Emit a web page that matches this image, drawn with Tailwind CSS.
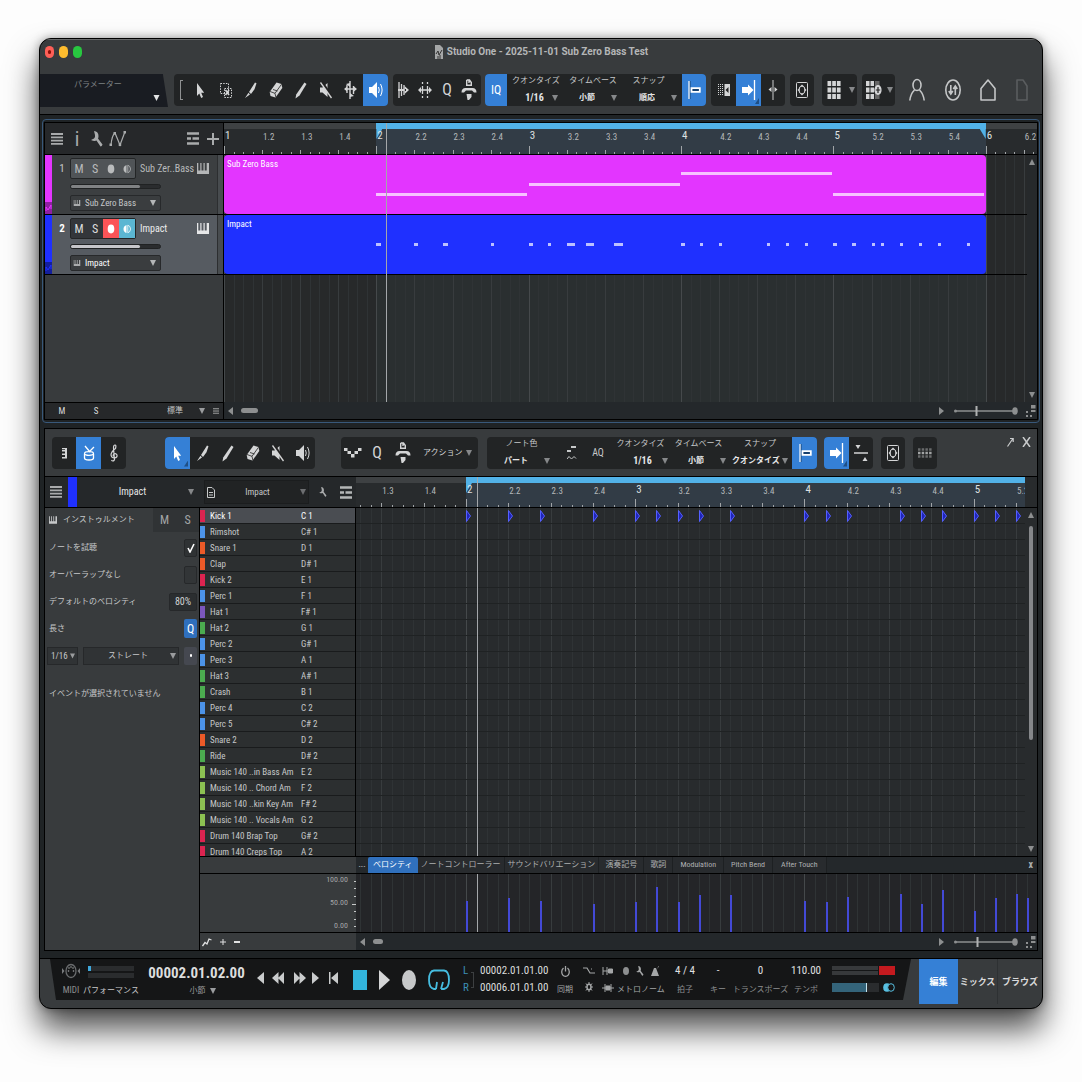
<!DOCTYPE html>
<html lang="ja">
<head>
  <meta charset="UTF-8" />
  <meta name="viewport" content="width=device-width, initial-scale=1" />
  <title>Studio One - 2025-11-01 Sub Zero Bass Test</title>
  <script src="https://cdn.jsdelivr.net/npm/@tailwindcss/browser@4"></script>
</head>
<body class="min-h-screen bg-[#fdfdfd] px-[39px] pt-[38px] pb-[74px] font-['Roboto_Condensed','Roboto','Noto_Sans_CJK_JP',sans-serif] text-[9px] leading-3 text-[#c6c8c9]">

  <!-- Icon sprite -->
  <svg class="hidden" aria-hidden="true">
    <symbol id="i-down" viewBox="0 0 6 6"><path fill="currentColor" d="M0 0h6L3 6z"/></symbol>
    <symbol id="i-up" viewBox="0 0 6 6"><path fill="currentColor" d="M0 6h6L3 0z"/></symbol>
    <symbol id="i-left" viewBox="0 0 5 8"><path fill="currentColor" d="M5 0v8L0 4z"/></symbol>
    <symbol id="i-right" viewBox="0 0 5 8"><path fill="currentColor" d="M0 0v8l5-4z"/></symbol>
    <symbol id="i-cursor" viewBox="0 0 14 20"><path fill="currentColor" d="M3 3v13l2.300-2.400L7.200 18l1.800-1-1.800-4.300h3z"/></symbol>
    <symbol id="i-range" viewBox="0 0 14 20"><path fill="none" stroke="currentColor" stroke-dasharray="1.500 1.200" d="M1.500 3.500h8v10h-8z"/><path fill="none" stroke="currentColor" stroke-dasharray="1.500 1.200" d="M5.500 8.500h7v9h-7z"/><path stroke="currentColor" stroke-width="1.600" d="M6.500 10l3.500 5M10 10l-3.500 5"/></symbol>
    <symbol id="i-knife" viewBox="0 0 14 20"><path fill="currentColor" d="M11 2.500l1.500.8-2 6L7 14 5 12zM4.500 12.800L6 14.400 1 18z"/></symbol>
    <symbol id="i-eraser" viewBox="0 0 14 20"><path fill="currentColor" d="M7.500 2.500l5 1.500.8 4-6.800 9.500-5-1.500L.700 12z"/><path fill="none" stroke="#222" stroke-width=".8" d="M1 11.500l5 1.800.800 3.700M6 13.300l6.500-9M4 9.500l4.500 1.500"/></symbol>
    <symbol id="i-paint" viewBox="0 0 14 20"><path fill="currentColor" d="M10.500 2.500l2 1.500-7 11.500-4 3 .7-4z"/></symbol>
    <symbol id="i-mute" viewBox="0 0 14 20"><path fill="currentColor" d="M1 7.500h2.500L8.500 3v14l-5-4.500H1z"/><path stroke="#222" stroke-width="2.500" d="M3 2l10 15"/><path stroke="currentColor" stroke-width="1.300" d="M1.500 2.500l11 15.500"/></symbol>
    <symbol id="i-listen" viewBox="0 0 14 20"><path fill="currentColor" d="M0 7h3l5-5v16l-5-5H0z"/><path fill="none" stroke="currentColor" d="M9.500 7q1.500 3 0 6M11.500 4q3.200 6 0 12"/></symbol>
    <symbol id="i-bend" viewBox="0 0 14 20"><path fill="none" stroke="currentColor" stroke-width="1.400" d="M6 1v18M1 9h10M3 5v8M9.500 6v8"/><path fill="currentColor" d="M2 4l4 3V3zM10 16l-4-3v4zM13 9l-3-2.500v5zM0 9l3-2.500v5z"/></symbol>
    <symbol id="i-snapin" viewBox="0 0 12 20"><path fill="none" stroke="currentColor" stroke-width="1.300" d="M2 2v16M4.500 4v12M7 5v10"/><path fill="currentColor" d="M12 10L7.500 6v8zM1 9h8v2H1z"/></symbol>
    <symbol id="i-stretch" viewBox="0 0 14 20"><path stroke="currentColor" stroke-width="1.300" d="M2 10h10M4.500 6v8M9.500 6v8M4.500 2v2M9.500 2v2M4.500 16v2M9.500 16v2"/><path fill="currentColor" d="M0 10l3-3v6zM14 10l-3-3v6z"/></symbol>
    <symbol id="i-macro" viewBox="0 0 16 22"><path fill="none" stroke="currentColor" stroke-width="1.400" d="M5.700 1v5.300h4.600V3.500L8.500 1H5.700M8 1v3"/><path fill="currentColor" d="M.500 13.500q0-4.500 4-4.500h7q4 0 4 4.500H13l-2-2H5l-2 2zM5.500 15h5v3L8 21H6.500z"/></symbol>
    <symbol id="i-snap" viewBox="0 0 14 20"><path stroke="#16406f" d="M3 1v18"/><path stroke="currentColor" stroke-width="1.200" d="M2 1v18"/><path fill="#16406f" stroke="currentColor" stroke-width="1.800" d="M4.500 8.200h8.300v3.600H4.500z"/></symbol>
    <symbol id="i-pre" viewBox="0 0 14 20"><path stroke="currentColor" stroke-dasharray="1 1" d="M1.500 4v12M3.500 4v12M5.500 4v12"/><path fill="currentColor" d="M7.500 4H13v12H7.500z"/><path fill="#222" d="M11.500 7v6L8.500 10z"/></symbol>
    <symbol id="i-follow" viewBox="0 0 14 20"><path fill="currentColor" d="M0 7h6V4.500l5.500 5.500L6 15.500V13H0z"/><path stroke="currentColor" stroke-width="1.300" d="M12.500 0v20"/></symbol>
    <symbol id="i-center" viewBox="0 0 14 20"><path stroke="#77797a" stroke-width="2" d="M7 0v20"/><path fill="currentColor" d="M2.500 9.500L5.500 7v5zM11.500 9.500L8.500 7v5z"/></symbol>
    <symbol id="i-zoom" viewBox="0 0 14 20"><rect x="1.500" y="2.500" width="11" height="15" rx="1" fill="none" stroke="currentColor"/><ellipse cx="7" cy="10" rx="3" ry="4" fill="none" stroke="currentColor"/><path fill="currentColor" d="M7 4.500l2 2H5zM7 15.500l2-2H5zM2.500 10l2-2v4zM11.500 10l-2-2v4z"/></symbol>
    <symbol id="i-grid" viewBox="0 0 14 18"><path fill="currentColor" d="M.500 0h3.700v5H.500zM5.200 0h3.700v5H5.200zM9.900 0h3.700v5H9.900zM.500 6.500h3.700v5H.500zM5.200 6.500h3.700v5H5.200zM9.900 6.500h3.700v5H9.900zM.500 13h3.700v5H.500zM5.200 13h3.700v5H5.200zM9.900 13h3.700v5H9.900z"/></symbol>
    <symbol id="i-gridadd" viewBox="0 0 16 18"><path fill="currentColor" d="M0 0h3.500v5H0zM4.500 0H8v5H4.500zM0 6.500h3.500v5H0zM4.500 6.500H8v5H4.500zM0 13h3.500v5H0zM4.500 13H8v5H4.500z"/><path fill="#666" d="M9 0h4.500v18H9z"/><ellipse cx="12" cy="9" rx="3.600" ry="5" fill="currentColor"/><path stroke="#222" stroke-width="1.200" d="M12 6v6M9.800 9h4.400"/></symbol>
    <symbol id="i-menu" viewBox="0 0 12 12"><path stroke="currentColor" stroke-width="1.800" d="M0 1h12M0 4.300h12M0 7.600h12M0 10.900h12"/></symbol>
    <symbol id="i-wrench" viewBox="0 0 12 16"><path fill="currentColor" d="M3 0q4.500.5 4.500 5 0 1.500-.5 2.500l4.500 6q-.5 2-2 2L5.500 9.500Q3.500 10.500 0 9l3-1.500q1.500-1 1-3.500Q3.500 2 3 0z"/></symbol>
    <symbol id="i-auto" viewBox="0 0 18 16"><path fill="none" stroke="currentColor" stroke-width="1.200" d="M2 14Q3 4 6 2l5 12L15.500 2"/><path fill="currentColor" d="M.500 12.500h2.500V15H.500zM4.500 1H7v2.500H4.500zM9.700 12.500h2.500V15H9.700zM14.500 0H17v2.500h-2.500z"/></symbol>
    <symbol id="i-lanes" viewBox="0 0 12 13"><path stroke="currentColor" stroke-width="2.400" d="M0 1.500h12M0 6.500h4M5.500 6.500H12M0 11.500h12"/></symbol>
    <symbol id="i-plus" viewBox="0 0 12 12"><path stroke="currentColor" stroke-width="2" d="M6 0v12M0 6h12"/></symbol>
    <symbol id="i-keys" viewBox="0 0 12 11"><path fill="currentColor" d="M0 0h1.300v7.500h2V0h1.200v7.500h2V0h1.200v7.500h2V0H12v11H0z"/></symbol>
    <symbol id="i-cc" viewBox="0 0 7 8"><path fill="none" stroke="currentColor" d="M1 7V3l2 3 3-5v4"/></symbol>
    <symbol id="i-piano" viewBox="0 0 14 20"><path fill="currentColor" d="M5 5h5v10.500H5V14h3v-2H5v-1.600h3V8.500H5V7h3V6.300H5z"/></symbol>
    <symbol id="i-drum" viewBox="0 0 14 20"><path fill="none" stroke="currentColor" stroke-width="1.300" d="M2.500 11v4q0 2 4.500 2t4.500-2v-4M3 3l5 6M12 4L7 9"/><ellipse cx="7" cy="10.500" rx="4.500" ry="1.800" fill="none" stroke="currentColor" stroke-width="1.300"/></symbol>
    <symbol id="i-clef" viewBox="0 0 14 20"><path fill="none" stroke="currentColor" stroke-width="1.200" d="M7.500 17q-2 2-3 0M7.500 17L6.500 5q0-3 1.500-3t.500 3.500Q4 9 4 12q.500 3 3.500 3 3-.5 2.500-3-1-2-3-1-1.500 1-.5 2.500"/></symbol>
    <symbol id="i-steps" viewBox="0 0 18 10"><path fill="currentColor" d="M0 0h3.500v3H0zM3.500 3H7v3H3.500zM7 6h3.500v3.500H7zM10.500 3H14v3h-3.500zM14 0h3.500v3H14z"/></symbol>
    <symbol id="i-notes" viewBox="0 0 10 16"><path fill="currentColor" d="M4 1h5v2H4zM0 5h4v2H0z"/><path fill="none" stroke="currentColor" d="M0 14l2-2.500 2.500 2.500L7 11.500l2 2"/></symbol>
    <symbol id="i-split" viewBox="0 0 14 20"><path fill="currentColor" d="M1.500 2h5L4 6zM8.500 18h5L11 14z"/><path stroke="currentColor" stroke-width="1.400" d="M0 10h14"/></symbol>
    <symbol id="i-seq" viewBox="0 0 14 10"><path stroke="#696b6c" stroke-width="2.500" stroke-dasharray="2.500 1.200" d="M0 1.500h14M0 8.500h14"/><path stroke="#a2a4a5" stroke-width="2.500" stroke-dasharray="2.500 1.200" d="M0 5h14"/></symbol>
    <symbol id="i-doc" viewBox="0 0 8 11"><path fill="none" stroke="currentColor" d="M.500.500H5L7.500 3v7.500h-7zM2 5.500h4M2 8h4"/></symbol>
    <symbol id="i-rec" viewBox="0 0 8 10"><ellipse cx="4" cy="5" rx="3.300" ry="4.400" fill="currentColor"/></symbol>
    <symbol id="i-mon" viewBox="0 0 8 10"><path fill="currentColor" d="M3.500 1v8Q.500 8 .500 5t3-4z"/><path fill="none" stroke="currentColor" stroke-width=".8" d="M4.800 1.200Q7.500 2 7.500 5T4.800 8.800z"/></symbol>
    <symbol id="i-zoomdots" viewBox="0 0 10 12"><path fill="currentColor" d="M5 0h4.500v3.500H5zM5 5h4.500v2H5zM0 6h2v2H0zM0 10h2v2H0zM4 10h2v2H4z"/></symbol>
  </svg>

  <main class="overflow-hidden rounded-xl border border-black bg-[#383b3d] shadow-[0_20px_32px_rgba(0,0,0,0.7),0_0_10px_rgba(0,0,0,0.35)]">

    <!-- Title bar -->
    <header class="grid h-[34px] grid-cols-[1fr_auto_1fr] items-center border-t border-[#6a6c6d] pb-2.5 pl-[5px]">
      <div class="flex gap-[5px]">
        <button aria-label="Close" class="flex h-3 w-[9px] items-center justify-center rounded-full bg-[#fe5f57]"><span class="h-1 w-[3px] rounded-full bg-[#8c1007]"></span></button>
        <button aria-label="Minimize" class="h-3 w-[9px] rounded-full bg-[#febc2e]"></button>
        <button aria-label="Zoom" class="h-3 w-[9px] rounded-full bg-[#28c840]"></button>
      </div>
      <h1 class="flex items-center gap-1 pr-1 font-['Roboto',sans-serif] text-[10px] font-bold text-[#b4b6b7]">
        <svg class="h-3.5 w-2" viewBox="0 0 8 14"><path fill="#a5a7a8" d="M0 0h5l3 3v11H0z"/><path fill="none" stroke="#333" d="M1 9l2-3 1 4 3-5M3 14v-3M5 14v-4"/></svg>
        Studio One - 2025-11-01 Sub Zero Bass Test
      </h1>
    </header>

    <!-- Main toolbar -->
    <div class="flex h-[42px] items-start border-b border-black pt-px">
      <button class="relative h-[33px] w-[128px] bg-[#191c22] text-[8px] text-[#7f8284] [clip-path:polygon(0_0,96%_0,100%_100%,0_100%)]">
        <span class="absolute inset-x-0 top-[5px] pr-3">パラメーター</span>
        <svg class="absolute right-2 bottom-1.5 h-1.5 w-[7px] text-[#e3e4e5]"><use href="#i-down"/></svg>
      </button>
      <div class="ml-1.5 flex h-8 items-stretch overflow-hidden rounded-sm bg-[#222425] text-[#d4d5d6]">
        <div class="flex w-3.5 items-center justify-center"><span class="h-5 w-[3px] border border-r-0 border-[#8f9192]"></span></div>
        <button aria-label="Arrow tool" class="flex w-[25px] items-center justify-center"><svg class="h-5 w-3.5"><use href="#i-cursor"/></svg></button>
        <button aria-label="Range tool" class="flex w-[25px] items-center justify-center"><svg class="h-5 w-3.5"><use href="#i-range"/></svg></button>
        <button aria-label="Split tool" class="flex w-[25px] items-center justify-center"><svg class="h-5 w-3.5"><use href="#i-knife"/></svg></button>
        <button aria-label="Eraser tool" class="flex w-[25px] items-center justify-center"><svg class="h-5 w-3.5"><use href="#i-eraser"/></svg></button>
        <button aria-label="Paint tool" class="flex w-[25px] items-center justify-center"><svg class="h-5 w-3.5"><use href="#i-paint"/></svg></button>
        <button aria-label="Mute tool" class="flex w-[25px] items-center justify-center"><svg class="h-5 w-3.5"><use href="#i-mute"/></svg></button>
        <button aria-label="Bend tool" class="flex w-[25px] items-center justify-center"><svg class="h-5 w-3.5"><use href="#i-bend"/></svg></button>
        <button aria-label="Listen tool" class="flex w-[25px] items-center justify-center bg-[#3580d6] text-white"><svg class="h-5 w-3.5"><use href="#i-listen"/></svg></button>
      </div>
      <div class="ml-[5px] flex h-8 items-stretch rounded-sm bg-[#222425] text-[#d4d5d6]">
        <button aria-label="Tab to transient" class="flex w-5 items-center justify-center"><svg class="h-5 w-3"><use href="#i-snapin"/></svg></button>
        <button aria-label="Stretch" class="flex w-6 items-center justify-center"><svg class="h-5 w-3.5"><use href="#i-stretch"/></svg></button>
        <button class="w-5 text-[16px]">Q</button>
        <button aria-label="Macro" class="flex w-6 items-center justify-center"><svg class="h-[22px] w-4"><use href="#i-macro"/></svg></button>
      </div>
      <div class="ml-1 flex h-8 items-stretch overflow-hidden rounded-sm bg-[#222425]">
        <button class="w-[22px] bg-[#3580d6] text-[12px] text-white">IQ</button>
        <label class="flex w-[58px] flex-col items-center justify-between pt-px pb-0.5 text-[8px]"><span class="whitespace-nowrap">クオンタイズ</span>
          <span class="flex w-full items-center justify-end gap-2 pr-[7px]"><select class="appearance-none bg-transparent text-center text-[10px] font-bold text-[#e6e7e8]"><option>1/16</option></select><svg class="h-1.5 w-1.5 text-[#86888a]"><use href="#i-down"/></svg></span></label>
        <label class="flex w-[56px] flex-col items-center justify-between pt-px pb-0.5 text-[8px]"><span class="whitespace-nowrap">タイムベース</span>
          <span class="flex w-full items-center justify-end gap-4 pr-1"><select class="appearance-none bg-transparent text-center text-[8px] font-bold text-[#e6e7e8]"><option>小節</option></select><svg class="h-1.5 w-1.5 text-[#86888a]"><use href="#i-down"/></svg></span></label>
        <label class="flex w-[61px] flex-col items-center justify-between pt-px pb-0.5 text-[8px]"><span class="pr-1.5 whitespace-nowrap">スナップ</span>
          <span class="flex w-full items-center justify-end gap-4 pr-[5px]"><select class="appearance-none bg-transparent text-center text-[8px] font-bold text-[#e6e7e8]"><option>順応</option></select><svg class="h-1.5 w-1.5 text-[#86888a]"><use href="#i-down"/></svg></span></label>
        <button aria-label="Snap" class="flex w-6 items-center justify-center bg-[#3580d6] text-white"><svg class="h-5 w-3.5"><use href="#i-snap"/></svg></button>
      </div>
      <div class="ml-[5px] flex h-8 items-stretch overflow-hidden rounded-sm bg-[#222425] text-[#d4d5d6]">
        <button aria-label="Autoscroll lock" class="flex w-[25px] items-center justify-center"><svg class="h-5 w-3.5"><use href="#i-pre"/></svg></button>
        <button aria-label="Autoscroll" class="relative flex w-[25px] items-center justify-center bg-[#3580d6] text-white"><svg class="h-5 w-3.5"><use href="#i-follow"/></svg><span class="absolute right-0.5 bottom-0.5 h-1.5 w-1 bg-[#1f4f86] [clip-path:polygon(100%_0,100%_100%,0_100%)]"></span></button>
        <button aria-label="Cursor follows edit" class="flex w-6 items-center justify-center"><svg class="h-5 w-3.5"><use href="#i-center"/></svg></button>
      </div>
      <button aria-label="Zoom to fit" class="ml-[5px] flex h-8 w-6 items-center justify-center rounded-sm bg-[#222425] text-[#d4d5d6]"><svg class="h-5 w-3.5"><use href="#i-zoom"/></svg></button>
      <button aria-label="Layouts" class="ml-2 flex h-8 w-[35px] items-center justify-between rounded-sm bg-[#222425] pr-0.5 pl-[5px] text-[#d4d5d6]"><svg class="h-[18px] w-3.5"><use href="#i-grid"/></svg><svg class="h-1.5 w-1.5 text-[#86888a]"><use href="#i-down"/></svg></button>
      <button aria-label="Add layout" class="ml-[5px] flex h-8 w-[33px] items-center justify-between rounded-sm bg-[#222425] pr-0.5 pl-1 text-[#d4d5d6]"><svg class="h-[18px] w-4"><use href="#i-gridadd"/></svg><svg class="h-1.5 w-1.5 text-[#86888a]"><use href="#i-down"/></svg></button>
      <div class="flex h-8 flex-1 items-center justify-between pr-3.5 pl-3.5 text-[#c4c6c7]">
        <button aria-label="Account"><svg class="h-6 w-4" viewBox="0 0 16 24" fill="none" stroke="currentColor" stroke-width="1.600"><ellipse cx="8" cy="7" rx="4" ry="5.500"/><path d="M.800 22.500Q1.500 16 5.500 12M15.200 22.500Q14.500 16 10.500 12"/></svg></button>
        <button aria-label="Sync"><svg class="h-6 w-4" viewBox="0 0 16 24" fill="none" stroke="currentColor" stroke-width="1.600"><ellipse cx="8" cy="12" rx="7.200" ry="10"/><path d="M5.800 7v9M3.800 13l2 3 2-3M10.300 17V8M8.300 11l2-3 2 3"/></svg></button>
        <button aria-label="Home"><svg class="h-6 w-4" viewBox="0 0 16 24" fill="none" stroke="currentColor" stroke-width="1.600"><path d="M1 10.500L8 2l7 8.500V22H1z" stroke-linejoin="round"/></svg></button>
        <button aria-label="Document" class="text-[#5a5d5f]"><svg class="h-6 w-3" viewBox="0 0 12 24" fill="none" stroke="currentColor" stroke-width="1.600"><path d="M1 2h6l4 6v14H1z" stroke-linejoin="round"/></svg></button>
      </div>
    </div>

    <div class="bg-[#1f2325] px-0.5 pt-1">

      <!-- Arrangement -->
      <section class="rounded border border-[#38587a] px-px pt-0.5 pb-0.5">
        <div class="grid grid-cols-[178px_1fr] border border-black bg-[#2b2e30]">
          <div class="bg-[#383b3d]">
            <div class="flex h-8 items-center border-b border-black bg-[#26282a] pr-1 pl-1.5 text-[#a9abac]">
              <button aria-label="Track list"><svg class="h-3 w-3"><use href="#i-menu"/></svg></button>
              <button class="w-7 text-[20px]">i</button>
              <button aria-label="Tools"><svg class="h-4 w-3"><use href="#i-wrench"/></svg></button>
              <button aria-label="Automation" class="ml-1.5"><svg class="h-4 w-[18px]"><use href="#i-auto"/></svg></button>
              <button aria-label="Layers" class="ml-auto"><svg class="h-[13px] w-3"><use href="#i-lanes"/></svg></button>
              <button aria-label="Add track" class="ml-2"><svg class="h-3 w-3"><use href="#i-plus"/></svg></button>
            </div>
            <div id="tracks"></div>
            <div class="h-[127px]"></div>
            <div class="flex h-[17px] items-center border-t border-black bg-[#26282a] text-[#d8d9da]">
              <button class="w-[34px]">M</button>
              <button class="w-[34px]">S</button>
              <label class="ml-auto flex items-center gap-4"><select aria-label="Size" class="appearance-none bg-transparent text-[8px] text-[#c6c8c9]"><option>標準</option></select><svg class="h-1.5 w-1.5 text-[#9a9c9e]"><use href="#i-down"/></svg></label>
              <svg class="mr-1 ml-2 h-2 w-1.5 text-[#8d8f90]"><use href="#i-menu"/></svg>
            </div>
          </div>
          <div class="border-l border-black">
            <div class="relative overflow-hidden">
              <div id="arrangeRuler" class="relative h-8 overflow-hidden border-b border-black bg-[#282b2d]"></div>
              <div class="relative">
                <div id="arrangeGrid" class="absolute inset-0 overflow-hidden bg-[#27292a]"></div>
                <div id="bassLane" class="relative h-[60px] border-b border-black"></div>
                <div id="impactLane" class="relative h-[60px] border-b border-black"></div>
                <div class="h-[127px]"></div>
                <div class="absolute inset-y-0 right-0 flex w-2.5 flex-col items-center justify-between bg-[#26292b] py-1 text-[#8d8f90]">
                  <svg class="h-1.5 w-1.5"><use href="#i-up"/></svg>
                  <svg class="h-1.5 w-1.5"><use href="#i-down"/></svg>
                </div>
              </div>
              <div id="arrangeCursor" class="absolute inset-y-0 w-px bg-[#a4a7aa]"></div>
            </div>
            <div class="flex h-[17px] items-center bg-[#24282b] pl-1 text-[#8d8f90]">
              <svg class="h-2 w-[5px]"><use href="#i-left"/></svg>
              <span class="ml-2 h-[5px] w-[17px] rounded-full bg-[#8d8f90]"></span>
              <svg class="mr-2.5 ml-auto h-2 w-[5px]"><use href="#i-right"/></svg>
              <svg class="h-3 w-16" viewBox="0 0 64 12"><path stroke="currentColor" stroke-width="1.500" d="M1 6h62"/><path stroke="#b0b2b3" stroke-width="2" d="M22.500 1v10"/><circle cx="1.500" cy="6" r="1.500" fill="currentColor"/><ellipse cx="61" cy="6" rx="2.800" ry="3.800" fill="currentColor"/></svg>
              <svg class="mr-px ml-2 h-3 w-2.5"><use href="#i-zoomdots"/></svg>
            </div>
          </div>
        </div>
      </section>

      <!-- Editor -->
      <section class="mx-0.5 mt-[5px] border border-black bg-[#383b3d]">
        <div class="flex h-12 items-center border-b border-black pl-[7px]">
          <div class="flex h-8 overflow-hidden rounded-sm bg-[#222425] text-[#d4d5d6]">
            <button aria-label="Piano view" class="flex w-6 items-center justify-center"><svg class="h-5 w-3.5"><use href="#i-piano"/></svg></button>
            <button aria-label="Drum view" class="flex w-[25px] items-center justify-center bg-[#3580d6] text-white"><svg class="h-5 w-3.5"><use href="#i-drum"/></svg></button>
            <button aria-label="Score view" class="flex w-[25px] items-center justify-center"><svg class="h-5 w-3.5"><use href="#i-clef"/></svg></button>
          </div>
          <div class="ml-[39px] flex h-8 overflow-hidden rounded-sm bg-[#222425] text-[#d4d5d6]">
            <button aria-label="Arrow tool" class="relative flex w-[25px] items-center justify-center bg-[#3580d6] text-white"><svg class="h-5 w-3.5"><use href="#i-cursor"/></svg><span class="absolute right-0.5 bottom-0.5 h-1.5 w-1 bg-[#1f4f86] [clip-path:polygon(100%_0,100%_100%,0_100%)]"></span></button>
            <button aria-label="Split tool" class="flex w-[25px] items-center justify-center"><svg class="h-5 w-3.5"><use href="#i-knife"/></svg></button>
            <button aria-label="Paint tool" class="flex w-[25px] items-center justify-center"><svg class="h-5 w-3.5"><use href="#i-paint"/></svg></button>
            <button aria-label="Eraser tool" class="flex w-[25px] items-center justify-center"><svg class="h-5 w-3.5"><use href="#i-eraser"/></svg></button>
            <button aria-label="Mute tool" class="flex w-[25px] items-center justify-center"><svg class="h-5 w-3.5"><use href="#i-mute"/></svg></button>
            <button aria-label="Listen tool" class="flex w-[25px] items-center justify-center"><svg class="h-5 w-3.5"><use href="#i-listen"/></svg></button>
          </div>
          <div class="ml-[26px] flex h-8 w-[137px] items-center rounded-sm bg-[#222425] text-[#d4d5d6]">
            <button aria-label="Step pattern" class="flex w-6 items-center justify-center"><svg class="h-2.5 w-[18px]"><use href="#i-steps"/></svg></button>
            <button class="w-6 text-[16px]">Q</button>
            <button aria-label="Macro" class="flex w-7 items-center justify-center"><svg class="h-[22px] w-4"><use href="#i-macro"/></svg></button>
            <button class="ml-1.5 flex items-center gap-[3px] text-[8px] whitespace-nowrap">アクション<svg class="h-1.5 w-1.5 text-[#86888a]"><use href="#i-down"/></svg></button>
          </div>
          <div class="ml-[9px] flex h-8 items-stretch overflow-hidden rounded-sm bg-[#222425]">
            <label class="flex w-[69px] flex-col items-center justify-between pt-px pb-0.5 text-[8px]"><span class="whitespace-nowrap">ノート色</span>
              <span class="flex w-full items-center justify-end gap-4 pr-1.5"><select class="appearance-none bg-transparent text-center text-[8px] font-bold text-[#e6e7e8]"><option>パート</option></select><svg class="h-1.5 w-1.5 text-[#86888a]"><use href="#i-down"/></svg></span></label>
            <button aria-label="Notes display" class="flex w-8 items-center justify-center"><svg class="h-4 w-2.5"><use href="#i-notes"/></svg></button>
            <button class="w-5 text-[10px]">AQ</button>
            <label class="flex w-[61px] flex-col items-center justify-between pt-px pb-0.5 pl-1 text-[8px]"><span class="whitespace-nowrap">クオンタイズ</span>
              <span class="flex w-full items-center justify-end gap-2.5 pr-px"><select class="appearance-none bg-transparent text-center text-[10px] font-bold text-[#e6e7e8]"><option>1/16</option></select><svg class="h-1.5 w-1.5 text-[#86888a]"><use href="#i-down"/></svg></span></label>
            <label class="flex w-[59px] flex-col items-center justify-between pt-px pb-0.5 text-[8px]"><span class="whitespace-nowrap">タイムベース</span>
              <span class="flex w-full items-center justify-end gap-4 pr-0.5"><select class="appearance-none bg-transparent text-center text-[8px] font-bold text-[#e6e7e8]"><option>小節</option></select><svg class="h-1.5 w-1.5 text-[#86888a]"><use href="#i-down"/></svg></span></label>
            <label class="flex w-16 flex-col items-center justify-between pt-px pb-0.5 text-[8px]"><span class="whitespace-nowrap">スナップ</span>
              <span class="flex w-full items-center justify-end gap-0.5 pr-1"><select class="appearance-none bg-transparent text-center text-[8px] font-bold text-[#e6e7e8]"><option>クオンタイズ</option></select><svg class="h-1.5 w-1.5 text-[#86888a]"><use href="#i-down"/></svg></span></label>
            <button aria-label="Snap" class="flex w-[25px] items-center justify-center bg-[#3580d6] text-white"><svg class="h-5 w-3.5"><use href="#i-snap"/></svg></button>
          </div>
          <div class="ml-[7px] flex h-8 overflow-hidden rounded-sm bg-[#222425] text-[#d4d5d6]">
            <button aria-label="Autoscroll" class="relative flex w-[25px] items-center justify-center bg-[#3580d6] text-white"><svg class="h-5 w-3.5"><use href="#i-follow"/></svg><span class="absolute right-0.5 bottom-0.5 h-1.5 w-1 bg-[#1f4f86] [clip-path:polygon(100%_0,100%_100%,0_100%)]"></span></button>
            <button aria-label="Split view" class="flex w-6 items-center justify-center"><svg class="h-5 w-3.5"><use href="#i-split"/></svg></button>
          </div>
          <button aria-label="Zoom to fit" class="ml-2 flex h-8 w-6 items-center justify-center rounded-sm bg-[#222425] text-[#d4d5d6]"><svg class="h-5 w-3.5"><use href="#i-zoom"/></svg></button>
          <button aria-label="Step grid" class="ml-2 flex h-8 w-6 items-center justify-center rounded-sm bg-[#222425]"><svg class="h-2.5 w-3.5"><use href="#i-seq"/></svg></button>
          <div class="ml-auto flex gap-2 self-start pt-2 pr-1.5 text-[#c9cbcc]">
            <button aria-label="Detach"><svg class="h-2.5 w-[7px]" viewBox="0 0 7 10" fill="none" stroke="currentColor" stroke-width="1.200"><path d="M.500 9.500L6 1.500M3 1.500h3.200V5"/></svg></button>
            <button aria-label="Close editor"><svg class="h-2.5 w-[9px]" viewBox="0 0 9 10" stroke="currentColor" stroke-width="1.500"><path d="M1 0l7 10M8 0L1 10"/></svg></button>
          </div>
        </div>

        <div class="grid grid-cols-[155px_156px_1fr]">
          <!-- Header row -->
          <div class="flex h-[31px] items-stretch border-b border-black bg-[#25282a]">
            <button aria-label="Track list" class="w-[23px] pl-[5px] text-[#a9abac]"><svg class="h-3 w-3"><use href="#i-menu"/></svg></button>
            <span class="w-[9px] bg-[#1f30ff]"></span>
            <label class="flex flex-1 items-center text-[10px]"><select aria-label="Part" class="flex-1 appearance-none bg-transparent text-center text-[#e6e7e8]"><option>Impact</option></select><svg class="mr-1.5 h-1.5 w-1.5 text-[#86888a]"><use href="#i-down"/></svg></label>
          </div>
          <div class="flex h-[31px] items-center border-b border-black bg-[#25282a] pl-1">
            <label class="flex h-6 w-[105px] items-center border border-[#1b1d1e] bg-[#212324] px-0.5"><svg class="h-[11px] w-2"><use href="#i-doc"/></svg><select aria-label="Drum map" class="flex-1 appearance-none bg-transparent text-center"><option>Impact</option></select><svg class="h-1.5 w-1.5 text-[#6c6e70]"><use href="#i-down"/></svg></label>
            <svg class="ml-2.5 h-2.5 w-2 text-[#a9abac]"><use href="#i-wrench"/></svg>
            <svg class="mr-1 ml-auto h-[13px] w-3 text-[#b4b6b7]"><use href="#i-lanes"/></svg>
          </div>
          <div class="h-[31px] border-b border-black bg-[#282b2d] pr-3"><div id="editRuler" class="relative h-full overflow-hidden"></div></div>

          <!-- Inspector -->
          <div class="row-span-3 border-r border-black text-[8px]">
            <div class="flex h-6 items-center pl-1"><svg class="mr-1.5 h-2 w-2"><use href="#i-keys"/></svg><span class="flex-1 whitespace-nowrap">インストゥルメント</span>
              <span class="flex h-full bg-[#303335] text-[12px] text-[#a4a6a7]"><button class="w-[23px]">M</button><button class="w-[23px]">S</button></span></div>
            <label class="flex h-7 items-center justify-between pt-1 pr-0.5 pl-1">ノートを試聴<span class="relative flex"><input type="checkbox" checked class="peer h-[18px] w-[13px] appearance-none rounded-xs border border-[#26282a] bg-[#2f3234]" /><svg class="absolute inset-0 m-auto hidden h-2.5 w-2 text-white peer-checked:block" viewBox="0 0 8 10" fill="none" stroke="currentColor" stroke-width="1.600"><path d="M1 5l2 4 4-8"/></svg></span></label>
            <label class="flex h-[27px] items-center justify-between pt-0.5 pr-0.5 pl-1">オーバーラップなし<input type="checkbox" class="h-[18px] w-[13px] appearance-none rounded-xs border border-[#26282a] bg-[#323537]" /></label>
            <label class="flex h-[27px] items-center justify-between pt-0.5 pr-0.5 pl-1">デフォルトのベロシティ<input type="text" value="80%" class="h-[18px] w-7 rounded-xs border border-[#26282a] bg-[#2b2e30] text-center text-[10px] text-[#d0d2d3]" /></label>
            <div class="flex h-[27px] items-center justify-between pt-0.5 pr-0.5 pl-1">長さ<button class="h-[19px] w-[13px] rounded-xs bg-[#2f6fbd] text-[12px] text-white">Q</button></div>
            <div class="flex h-[27px] items-center justify-between pt-0.5 pr-0.5 pl-0.5">
              <label class="flex h-[18px] w-[31px] items-center gap-0.5 border border-[#26282a] bg-[#303335] pl-[3px]"><select aria-label="Length" class="appearance-none bg-transparent text-[9px]"><option>1/16</option></select><svg class="h-1.5 w-[5px] shrink-0 text-[#9a9c9e]"><use href="#i-down"/></svg></label>
              <label class="flex h-[18px] w-24 items-center border border-[#26282a] bg-[#303335] px-0.5"><select aria-label="Feel" class="flex-1 appearance-none bg-transparent text-center"><option>ストレート</option></select><svg class="h-1.5 w-1.5 text-[#9a9c9e]"><use href="#i-down"/></svg></label>
              <button aria-label="Dotted" class="flex h-[18px] w-[13px] items-center justify-center rounded-xs bg-[#454850]"><span class="h-[3px] w-0.5 rounded-full bg-white"></span></button>
            </div>
            <p class="pt-5 pl-1">イベントが選択されていません</p>
          </div>

          <!-- Drum lanes -->
          <div id="drums" class="h-[348px] overflow-hidden border-r border-black bg-[#2c2f30]"></div>
          <div class="flex h-[348px]">
            <div id="editGrid" class="relative flex-1 overflow-hidden bg-[#282b2d]"></div>
            <div class="flex w-3 flex-col items-center bg-[#282b2d] py-1 text-[#8d8f90]">
              <svg class="h-1.5 w-1.5 shrink-0"><use href="#i-up"/></svg>
              <span class="mt-2 h-[214px] w-1 rounded-full bg-[#85878a]"></span>
              <svg class="mt-auto h-1.5 w-1.5 shrink-0"><use href="#i-down"/></svg>
            </div>
          </div>

          <!-- Controller tabs -->
          <div class="border-t border-black"></div>
          <nav class="flex h-[17px] items-stretch border-t border-black bg-[#24282b] text-[8px] whitespace-nowrap text-[#adafb0]">
            <button class="w-3 font-bold">...</button>
            <button class="rounded-t-xs bg-[#3070bd] px-[5px] text-white">ベロシティ</button>
            <button class="border-r border-[#1d2022] bg-[#282b2e] px-[3px]">ノートコントローラー</button>
            <button class="border-r border-[#1d2022] bg-[#282b2e] px-[3px]">サウンドバリエーション</button>
            <button class="border-r border-[#1d2022] bg-[#282b2e] px-1.5">演奏記号</button>
            <button class="border-r border-[#1d2022] bg-[#282b2e] px-1.5">歌詞</button>
            <button class="border-r border-[#1d2022] bg-[#282b2e] px-[7px]">Modulation</button>
            <button class="border-r border-[#1d2022] bg-[#282b2e] px-[7px]">Pitch Bend</button>
            <button class="border-r border-[#1d2022] bg-[#282b2e] px-2">After Touch</button>
            <button aria-label="Close lane" class="mr-1 ml-auto text-[10px] font-bold">x</button>
          </nav>

          <!-- Velocity lane -->
          <div>
            <div class="flex h-[60px] border-y border-black">
              <div class="ml-auto flex flex-col justify-between pr-1 text-right text-[8px] text-[#a4a6a7]"><span>100.00</span><span>50.00</span><span>0.00</span></div>
              <svg class="mt-1.5 h-12 w-1" viewBox="0 0 4 48"><path stroke="#c6c8c9" d="M2 1.500h2M2 8.500h2M2 16.500h2M0 24.500h4M2 31.500h2M2 39.500h2M2 46.500h2"/></svg>
            </div>
            <div class="flex h-[17px] items-center gap-2 pl-0.5 text-[#e0e1e2]">
              <svg class="h-2.5 w-2.5" viewBox="0 0 10 10" fill="none" stroke="currentColor" stroke-width="1.300"><path d="M.500 9L3 5.500 5 7l2-5 2.500 1"/></svg>
              <button aria-label="Add lane"><svg class="h-1.5 w-1.5"><use href="#i-plus"/></svg></button>
              <button aria-label="Remove lane" class="h-0.5 w-1.5 bg-current"></button>
            </div>
          </div>
          <div>
            <div class="h-[60px] overflow-hidden border-y border-black bg-[#242528] pr-3"><div id="velocity" class="relative h-full"></div></div>
            <div class="flex h-[17px] items-center bg-[#24282b] pl-1 text-[#8d8f90]">
              <svg class="h-2 w-[5px]"><use href="#i-left"/></svg>
              <span class="ml-2 h-[5px] w-2.5 rounded-full bg-[#8d8f90]"></span>
              <svg class="mr-2.5 ml-auto h-2 w-[5px]"><use href="#i-right"/></svg>
              <svg class="h-3 w-16" viewBox="0 0 64 12"><path stroke="currentColor" stroke-width="1.500" d="M1 6h62"/><path stroke="#b0b2b3" stroke-width="2" d="M23.500 1v10"/><circle cx="1.500" cy="6" r="1.500" fill="currentColor"/><ellipse cx="61" cy="6" rx="2.800" ry="3.800" fill="currentColor"/></svg>
              <svg class="mr-px ml-2 h-3 w-2.5"><use href="#i-zoomdots"/></svg>
            </div>
          </div>
        </div>
      </section>
      <div class="h-[7px]"></div>
    </div>

    <!-- Transport -->
    <footer class="flex h-[50px] border-t border-black">
      <div class="mb-2 ml-2.5 flex flex-1 items-stretch bg-[#151617] pl-2.5 whitespace-nowrap [clip-path:polygon(0_0,100%_0,calc(100%_-_8px)_100%,6px_100%)]">
        <div class="flex w-[22px] flex-col items-center justify-between pt-1 pb-1 text-[#8d8f90]">
          <svg class="h-4 w-[18px]" viewBox="0 0 18 16"><ellipse cx="9" cy="8" rx="5" ry="6.500" fill="none" stroke="#6a6c6e" stroke-width="1.300"/><path fill="#77797b" d="M0 5v6l2.500-3zM18 5v6l-2.500-3z" transform="matrix(-1 0 0 1 18 0)"/><g fill="#a0a2a3"><circle cx="6.500" cy="8" r=".8"/><circle cx="11.500" cy="8" r=".8"/><circle cx="7" cy="5" r=".8"/><circle cx="11" cy="5" r=".8"/><circle cx="9" cy="4" r=".8"/></g></svg>
          <button>MIDI</button>
        </div>
        <div class="flex w-[58px] flex-col items-center justify-between pt-[7px] pb-[3px]">
          <div class="flex w-[46px] flex-col gap-0.5"><span class="h-[5px] border-l-[3px] border-[#3fa8dc] bg-[#2a2c2e]"></span><span class="h-[5px] bg-[#2a2c2e]"></span></div>
          <button class="text-[8px]">パフォーマンス</button>
        </div>
        <div class="flex w-[113px] flex-col items-center justify-between pt-1.5 pb-[3px]">
          <span class="text-[15px] leading-4 font-bold text-[#dcdddd]">00002.01.02.00</span>
          <button class="ml-3 flex items-center gap-1 text-[8px] text-[#9a9c9e]">小節<svg class="h-1.5 w-1.5"><use href="#i-down"/></svg></button>
        </div>
        <div class="flex w-[94px] items-center gap-2 pb-1 pl-1 text-[#c9cbcc]">
          <button aria-label="Previous bar"><svg class="h-3 w-[7px]" viewBox="0 0 7 12"><path fill="currentColor" d="M7 0v12L0 6z"/></svg></button>
          <button aria-label="Rewind"><svg class="h-3 w-3" viewBox="0 0 12 12"><path fill="currentColor" d="M6.500 0v12L0 6zM12 0v12L6 6z"/></svg></button>
          <button aria-label="Fast forward" class="ml-0.5"><svg class="h-3 w-3" viewBox="0 0 12 12"><path fill="currentColor" d="M0 0v12l6-6zM5.500 0v12L12 6z"/></svg></button>
          <button aria-label="Next bar" class="-ml-0.5"><svg class="h-3 w-[7px]" viewBox="0 0 7 12"><path fill="currentColor" d="M0 0v12l7-6z"/></svg></button>
          <button aria-label="Return to zero" class="ml-0.5"><svg class="h-3 w-[9px]" viewBox="0 0 9 12"><path fill="currentColor" d="M0 0h1.500v12H0zM9 0v12L2 6z"/></svg></button>
        </div>
        <div class="flex w-[108px] items-center justify-between pr-[5px] pl-1.5">
          <button aria-label="Stop" class="h-5 w-3.5 bg-[#32b4dc]"></button>
          <button aria-label="Play"><svg class="h-5 w-[11px]" viewBox="0 0 11 20"><path fill="#d4d5d6" d="M0 0v20l11-10z"/></svg></button>
          <button aria-label="Record" class="h-5 w-3.5 rounded-[50%] bg-[#c6c8c9]"></button>
          <button aria-label="Loop"><svg class="h-[22px] w-[22px]" viewBox="0 0 22 22" fill="none" stroke="#46bde0" stroke-width="1.800"><path d="M8 20H6Q1 19 1 11 1 2 6 1.500h10q5 .5 5 9.500 0 8-5 9h-3M9 13L8 20M15 13l-2 7"/></svg></button>
        </div>
        <div class="flex w-5 items-center justify-between py-1 pr-px pl-2">
          <div class="flex h-full flex-col justify-between py-0.5 text-[11px] text-[#3c8fb5]"><span>L</span><span>R</span></div>
          <span class="h-4 w-[3px] border border-l-0 border-[#3c3f41]"></span>
        </div>
        <div class="flex w-[78px] flex-col justify-between py-[5px] pl-[5px] text-[11px] leading-[14px] text-[#dcdddd]"><span>00002.01.01.00</span><span>00006.01.01.00</span></div>
        <div class="flex w-6 flex-col items-center justify-between pt-[7px] pb-1 text-[8px] text-[#a4a6a7]">
          <svg class="h-[11px] w-[9px]" viewBox="0 0 9 11" fill="none" stroke="currentColor" stroke-width="1.300"><path d="M2.500 2Q.700 3.500.700 6q.300 4 3.800 4.300Q8 10 8.300 6q0-2.500-1.800-4M4.500 0v5.500"/></svg>
          <button>同期</button>
        </div>
        <div class="flex w-6 flex-col items-center justify-between py-2 text-[#a4a6a7]">
          <svg class="h-2 w-3" viewBox="0 0 12 8" fill="none" stroke="currentColor" stroke-width="1.200"><path d="M0 1h4l3 5h5M8 2h1"/></svg>
          <svg class="h-2.5 w-2" viewBox="0 0 8 10" fill="none" stroke="currentColor"><ellipse cx="4" cy="5" rx="2" ry="2.800" stroke-width="1.500"/><path d="M4 0v2M4 8v2M0 5h2M6 5h2M1 1.500l1.500 2M7 1.500L5.500 3.500M1 8.500l1.500-2M7 8.500L5.500 6.500"/></svg>
        </div>
        <div class="flex w-3.5 flex-col items-center justify-between py-2 text-[#a4a6a7]">
          <svg class="h-2 w-3" viewBox="0 0 12 8" stroke="currentColor"><path d="M1 0v8M5 0v8M1 4h6"/><path fill="currentColor" d="M6.500 2h4v4h-4z"/></svg>
          <svg class="h-2 w-3" viewBox="0 0 12 8" stroke="currentColor"><path d="M0 4h12M3 0v8M9 0v8"/><path fill="currentColor" d="M4 2h4v4H4z"/></svg>
        </div>
        <div class="flex w-[52px] flex-col items-center justify-between pt-[7px] pb-1 text-[8px] text-[#a4a6a7]">
          <span class="flex items-center gap-[7px]"><span class="h-2 w-1.5 rounded-[50%] bg-[#8d8f90]"></span><svg class="h-2.5 w-2"><use href="#i-wrench"/></svg><svg class="h-2.5 w-2" viewBox="0 0 8 10"><path fill="currentColor" d="M3 2h2l3 8H0zM6 3l1.500-3 .5.500z"/></svg></span>
          <button>メトロノーム</button>
        </div>
        <div class="flex w-9 flex-col items-center justify-between pt-1.5 pb-1 text-[8px] text-[#8d8f90]"><span class="text-[11px] text-[#e0e1e2]">4 / 4</span><button>拍子</button></div>
        <div class="flex w-[30px] flex-col items-center justify-between pt-1.5 pb-1 text-[8px] text-[#8d8f90]"><span class="text-[11px] text-[#e0e1e2]">-</span><button>キー</button></div>
        <div class="flex w-[55px] flex-col items-center justify-between pt-1.5 pb-1 text-[8px] text-[#8d8f90]"><span class="text-[11px] text-[#e0e1e2]">0</span><button>トランスポーズ</button></div>
        <div class="flex w-9 flex-col items-center justify-between pt-1.5 pb-1 text-[8px] text-[#8d8f90]"><span class="text-[11px] text-[#e0e1e2]">110.00</span><button>テンポ</button></div>
        <div class="ml-2 flex w-[63px] flex-col justify-between pt-[7px] pb-2">
          <div class="flex h-[9px]"><div class="mr-px flex flex-1 flex-col gap-px"><span class="flex-1 bg-[#37393b]"></span><span class="flex-1 bg-[#37393b]"></span></div><span class="w-4 bg-[#c41a1f]"></span></div>
          <div class="flex h-[9px] items-center"><span class="h-full w-[35px] border-r border-[#c6e4ee] bg-[#34647a]"></span><span class="h-full w-3 bg-[#2a2c2e]"></span><svg class="ml-auto h-[9px] w-3" viewBox="0 0 12 9"><ellipse cx="4" cy="4.500" rx="3.800" ry="4.300" fill="#58bfe0"/><ellipse cx="8" cy="4.500" rx="3.300" ry="3.800" fill="#151617" stroke="#58bfe0"/></svg></div>
        </div>
      </div>
      <nav class="ml-2 flex pb-1 text-[9px] font-bold whitespace-nowrap text-[#d8d9da]">
        <button class="w-[39px] bg-[#3580d6] text-white">編集</button>
        <button class="w-10 border-r border-[#2e3133]">ミックス</button>
        <button class="w-[44px]">ブラウズ</button>
      </nav>
    </footer>
  </main>

  <script>
    const tracks = [
      { no: 1, name: 'Sub Zer..Bass', inst: 'Sub Zero Bass', color: '#e335ff', dark: '#8f1fa3', armed: false },
      { no: 2, name: 'Impact', inst: 'Impact', color: '#1f30ff', dark: '#141f9c', armed: true },
    ];
    const red = '#dc2450', blue = '#4c93e8', orange = '#ec5a28', purple = '#7b57bd', green = '#4bab4f', lime = '#8cc152';
    const drums = [
      ['Kick 1', 'C 1', red], ['Rimshot', 'C# 1', blue], ['Snare 1', 'D 1', orange], ['Clap', 'D# 1', orange],
      ['Kick 2', 'E 1', red], ['Perc 1', 'F 1', blue], ['Hat 1', 'F# 1', purple], ['Hat 2', 'G 1', green],
      ['Perc 2', 'G# 1', blue], ['Perc 3', 'A 1', blue], ['Hat 3', 'A# 1', green], ['Crash', 'B 1', green],
      ['Perc 4', 'C 2', blue], ['Perc 5', 'C# 2', blue], ['Snare 2', 'D 2', orange], ['Ride', 'D# 2', green],
      ['Music 140 ..in Bass Am', 'E 2', lime], ['Music 140 .. Chord Am', 'F 2', lime],
      ['Music 140 ..kin Key Am', 'F# 2', lime], ['Music 140 .. Vocals Am', 'G 2', lime],
      ['Drum 140 Brap Top', 'G# 2', red], ['Drum 140 Creps Top', 'A 2', red],
    ];
    // [bar position, velocity %]
    const kicks = [
      [2, 54], [2.25, 58], [2.4375, 54], [2.75, 49], [3, 51], [3.125, 78], [3.25, 51], [3.375, 63], [3.5625, 63],
      [4, 53], [4.125, 51], [4.25, 60], [4.5625, 65], [4.6875, 49], [4.8125, 73], [5, 37], [5.125, 58], [5.25, 65], [5.3125, 58],
    ];
    // [bar position, length in bars, height %]
    const bass = [[2, 0.99, 65], [3, 0.99, 47], [4, 0.99, 28], [5, 0.99, 65]];
    const impact = [
      [2, 0.03], [2.25, 0.025], [2.4375, 0.03], [2.75, 0.025], [3, 0.025], [3.125, 0.02], [3.25, 0.055], [3.375, 0.055], [3.5625, 0.055],
      [4, 0.025], [4.125, 0.02], [4.25, 0.02], [4.5625, 0.02], [4.6875, 0.02], [4.8125, 0.02], [5, 0.025], [5.125, 0.02], [5.25, 0.02],
      [5.3125, 0.02], [5.4375, 0.02], [5.5625, 0.02], [5.6875, 0.02], [5.875, 0.02],
    ];

    // Bar position to percent of the view width
    const arrangeView = { unit: 18.74, x: bar => (bar - 1) * 18.74, from: 1, to: 6.4 };
    const editView = { unit: 25.3, x: bar => 16.44 + (bar - 2) * 25.3, from: 1.375, to: 5.4 };
    const $ = id => document.getElementById(id);

    function drawRuler(el, view) {
      const left = view.x(2), width = view.unit * 4;
      let html = `<div class="absolute inset-x-0 top-0 h-1.5 bg-[#3e4143]"></div>
        <div class="absolute inset-y-0 bg-[#323c46]" style="left:${left}%;width:${width}%">
          <div class="h-1.5 bg-[#52b2e8]"></div>
          <span class="absolute top-1.5 left-0 h-2.5 w-1.5 bg-[#52b2e8] [clip-path:polygon(0_0,100%_0,0_100%)]"></span>
          <span class="absolute top-1.5 right-0 h-2.5 w-1.5 bg-[#52b2e8] [clip-path:polygon(0_0,100%_0,100%_100%)]"></span>
        </div>`;
      for (let b = view.from; b < view.to; b += 1 / 16) {
        const bar = Math.floor(b), beat = (b - bar) * 4 + 1;
        const size = beat === 1 ? 'h-2' : Number.isInteger(beat) ? 'h-1' : 'h-0.5';
        html += `<span class="absolute bottom-0 w-px bg-[#a0a4a7] ${size}" style="left:${view.x(b)}%"></span>`;
        if (beat === 1) html += `<span class="absolute top-[7px] ml-px text-[11px] text-[#dfe1e2]" style="left:${view.x(b)}%">${bar}</span>`;
        else if (Number.isInteger(beat)) html += `<span class="absolute top-2 ml-px text-[9px] text-[#b4b8ba]" style="left:${view.x(b)}%">${bar}.${beat}</span>`;
      }
      el.innerHTML = html;
    }

    function gridLines(view) {
      let html = '';
      for (let b = view.from; b < view.to; b += 1 / 16) {
        const beat = (b % 1) * 4;
        const tone = beat === 0 ? 'bg-[#45494b]' : Number.isInteger(beat) ? 'bg-[#383c3e]' : 'bg-[#2f3335]';
        html += `<span class="absolute inset-y-0 w-px ${tone}" style="left:${view.x(b)}%"></span>`;
      }
      return html;
    }

    function clip(name, color, notes) {
      return `<div class="absolute inset-y-0 left-0 overflow-hidden rounded px-[3px] pt-[3px] text-white" style="width:${arrangeView.x(6)}%;background:${color}">${name}</div>` +
        notes.map(([b, len, top]) => `<span class="absolute h-[3px] bg-white/70" style="left:${arrangeView.x(b)}%;width:${len * arrangeView.unit}%;top:${top || 47}%"></span>`).join('');
    }

    $('tracks').innerHTML = tracks.map(t => `
      <div class="flex h-[60px] border-b border-black ${t.armed ? 'bg-[#565b61]' : 'bg-[#3c3f41]'}">
        <div class="flex w-[7px] shrink-0 flex-col justify-end" style="background:${t.color}"><span class="flex h-3 items-center" style="background:${t.dark};color:${t.color}"><svg class="h-2 w-[7px]"><use href="#i-cc"/></svg></span></div>
        <div class="w-[18px] shrink-0 pt-2 pl-0.5 text-center text-[11px] ${t.armed ? 'font-bold text-white' : ''}">${t.no}</div>
        <div class="flex min-w-0 flex-1 flex-col items-start gap-[5px] pt-[3px]">
          <div class="flex w-full items-center">
            <div class="flex h-[21px] shrink-0 rounded-xs border border-[#232526] text-[12px] ${t.armed ? 'bg-[#33363a] text-[#dcdddd]' : 'bg-[#505457] text-[#b9bbbc]'}">
              <button class="w-4">M</button><button class="w-4">S</button>
              <button aria-label="Record" class="flex w-4 items-center justify-center ${t.armed ? 'bg-[#fb5457] text-white' : ''}"><svg class="h-2.5 w-2"><use href="#i-rec"/></svg></button>
              <button aria-label="Monitor" class="flex w-4 items-center justify-center ${t.armed ? 'bg-[#5bb6d2] text-white' : ''}"><svg class="h-2.5 w-2"><use href="#i-mon"/></svg></button>
            </div>
            <span class="ml-1 flex-1 text-[10px] whitespace-nowrap ${t.armed ? 'text-[#eceded]' : 'text-[#b9bbbc]'}">${t.name}</span>
            <svg class="mr-2 h-[11px] w-3 shrink-0 ${t.armed ? 'text-[#e6e7e8]' : 'text-[#b4b6b7]'}"><use href="#i-keys"/></svg>
          </div>
          <div class="flex h-[5px] w-[91px] rounded-full border border-[#202223] bg-[#2a2c2e]"><span class="w-[69px] rounded-full ${t.armed ? 'bg-[#c6c6ca]' : 'bg-[#808284]'}"></span></div>
          <label class="mt-px flex h-4 w-[91px] items-center rounded-xs border border-[#27292b] bg-[#3a3d3f] px-0.5"><svg class="mr-1 h-1.5 w-2 shrink-0 text-[#a9abac]"><use href="#i-keys"/></svg><select aria-label="Instrument" class="min-w-0 flex-1 appearance-none bg-transparent ${t.armed ? 'text-white' : ''}"><option>${t.inst}</option></select><svg class="mr-0.5 h-1.5 w-1.5 shrink-0 text-[#b4b6b7]"><use href="#i-down"/></svg></label>
        </div>
        <span class="w-1.5 shrink-0 border-l border-[#2c2e30] bg-[#484c4f]"></span>
      </div>`).join('');

    drawRuler($('arrangeRuler'), arrangeView);
    $('arrangeGrid').innerHTML = `<div class="absolute inset-y-0 bg-[#2a2f30]" style="left:${arrangeView.x(2)}%;width:${arrangeView.unit * 4}%"></div>` + gridLines(arrangeView);
    $('bassLane').innerHTML = clip('Sub Zero Bass', tracks[0].color, bass);
    $('impactLane').innerHTML = clip('Impact', tracks[1].color, impact);
    $('arrangeCursor').style.left = arrangeView.x(2.0625) + '%';

    $('drums').innerHTML = drums.map(([name, note, color], i) => `
      <div class="flex h-4 items-center border-b border-[#191b1c] ${i === 0 ? 'bg-[#4a4d52] text-white' : ''}">
        <span class="h-3 w-[5px]" style="background:${color}"></span>
        <span class="ml-[5px] w-[91px] whitespace-nowrap">${name}</span><span>${note}</span>
      </div>`).join('');

    drawRuler($('editRuler'), editView);
    const cursor = `<span class="absolute inset-y-0 w-px bg-[#a4a7aa]" style="left:${editView.x(2.0625)}%"></span>`;
    $('editRuler').innerHTML += cursor;
    $('editGrid').innerHTML = gridLines(editView) +
      drums.map(() => '<div class="relative h-4 border-b border-[#1f2223]"></div>').join('') +
      kicks.map(([b]) => `<svg class="absolute top-0.5 h-3 w-[5px]" style="left:${editView.x(b)}%" viewBox="0 0 5 12"><path fill="#1f24b8" stroke="#5560ff" d="M.500.500v11L4.500 6z"/></svg>`).join('') + cursor;
    $('velocity').innerHTML = gridLines(editView) +
      kicks.map(([b, v]) => `<span class="absolute bottom-0 w-0.5 bg-[#4349d6]" style="left:${editView.x(b)}%;height:${v}%"></span>`).join('') + cursor;
  </script>
</body>
</html>
